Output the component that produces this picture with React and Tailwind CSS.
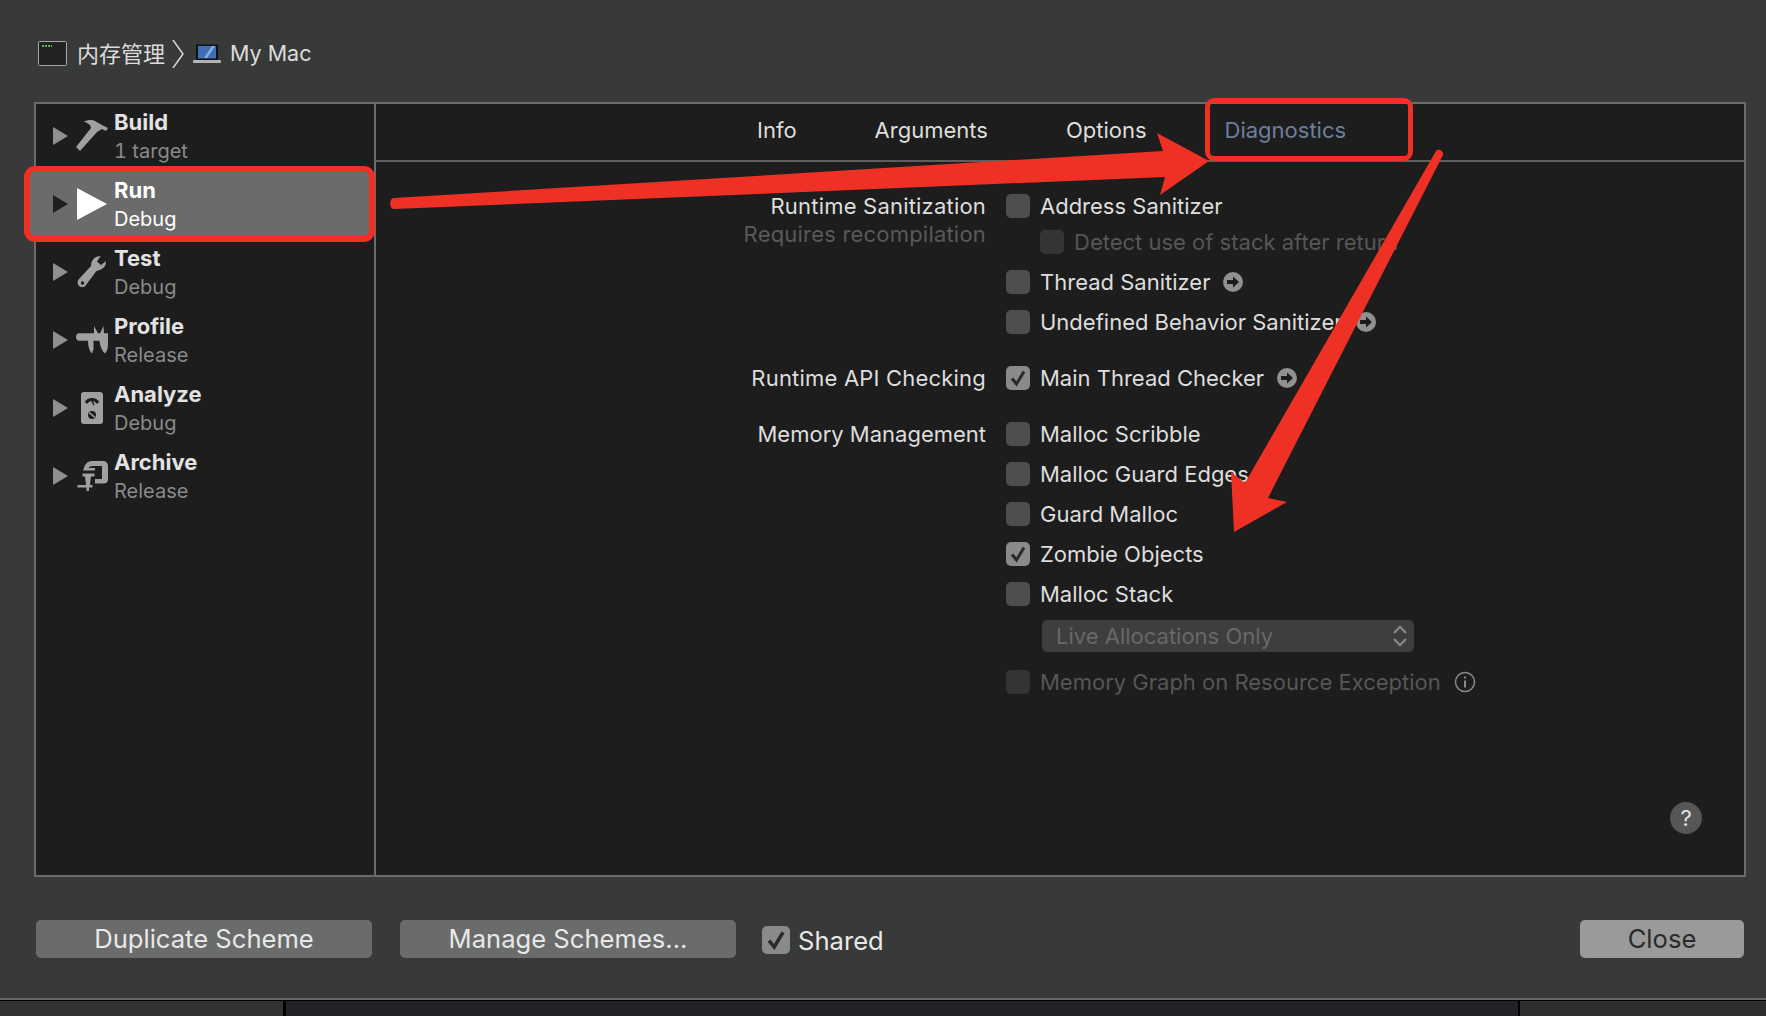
const font = "font-['Inter','Noto_Sans_CJK_SC',sans-serif]";

function Hammer() {
  return (
    <svg width="32" height="32" viewBox="0 0 32 32" fill="#a0a0a0">
      <path d="M0 27 L15 8 L14 5 C12 3.5 10 2.5 8 1.5 C12 0 16 -0.5 19 1 L26 5 L32 8 L30 11 L26 9 L21 12 L4 31 Z" />
    </svg>
  );
}

function Wrench() {
  return (
    <svg width="32" height="32" viewBox="0 0 32 32" fill="#a0a0a0">
      <path d="M24.7 0 C19 0 15 4 15 10 L3 23 C1 25 1 28 3 30 C5.5 32 8.5 31.5 10 29 L20 15.5 C21.5 14 24 14.5 25.7 13 C28.5 11.5 30 9 30 5 L25 9 L21 5.5 Z" />
      <circle cx="6.5" cy="27" r="1.7" fill="#1d1d1d" />
    </svg>
  );
}

function Calipers() {
  return (
    <svg width="32" height="30" viewBox="0 0 32 30" fill="#a0a0a0">
      <path d="M3 8.3 H18 L18 1 L22 8.3 H24 L27.5 1 L28 8.3 H32 V20 C32 24 30.5 27 29 28.5 C26 26 24 21 23.5 15.7 H17.5 V24 L16 28.5 C13.5 26 12 21 12 15.7 H3 C-1 15.7 -1 8.3 3 8.3 Z" />
    </svg>
  );
}

function Meter() {
  return (
    <svg width="22" height="32" viewBox="0 0 22 32">
      <rect width="22" height="32" rx="3" fill="#a0a0a0" />
      <path d="M5 11 A7 7 0 0 1 17 11" fill="none" stroke="#1d1d1d" strokeWidth="3" />
      <path d="M11 9 L13 13" stroke="#1d1d1d" strokeWidth="1.5" />
      <circle cx="11" cy="23" r="4" fill="#1d1d1d" />
      <path d="M8 20.5 L14 25.5" stroke="#a0a0a0" strokeWidth="1.6" />
    </svg>
  );
}

function Clamp() {
  return (
    <svg width="32" height="32" viewBox="0 0 32 32" fill="#a0a0a0">
      <path d="M8 8 C9 4 12 1 16 1 H27 C30 1 32 3 32 6 V20 C32 22 30 23.5 28 23.5 H19 V19 H26 V6 H17 C14 6 13 7 12.5 8 H19 V10.5 H7 Z" />
      <rect x="6.5" y="13.5" width="12" height="3" />
      <path d="M9 16 H15 L14 25 H10 Z" />
      <rect x="1.5" y="25" width="15" height="2.5" />
      <rect x="10.5" y="25" width="2.5" height="6" />
    </svg>
  );
}

function Play() {
  return (
    <svg width="30" height="32" viewBox="0 0 30 32" fill="#ffffff">
      <path d="M0 0 L30 16 L0 32 Z" />
    </svg>
  );
}

const schemes = [
  { name: "Build", sub: "1 target", icon: <Hammer /> },
  { name: "Run", sub: "Debug", icon: <Play />, active: true },
  { name: "Test", sub: "Debug", icon: <Wrench /> },
  { name: "Profile", sub: "Release", icon: <Calipers /> },
  { name: "Analyze", sub: "Debug", icon: <Meter /> },
  { name: "Archive", sub: "Release", icon: <Clamp /> },
];

function SchemeRow({ item }) {
  return (
    <div className="relative flex h-[68px] items-center pl-[17px]">
      {item.active && (
        <div className="absolute -top-[4px] -bottom-[4px] -left-[12px] -right-[1px] rounded-[11px] border-[6px] border-[#ee3124] bg-[#6b6b6b]" />
      )}
      <svg className="relative shrink-0" width="15" height="18" viewBox="0 0 15 18" fill={item.active ? "#1e1e1e" : "#8f8f8f"}>
        <path d="M0 0 L15 9 L0 18 Z" />
      </svg>
      <div className="relative ml-[8px] flex w-[32px] shrink-0 justify-center">{item.icon}</div>
      <div className="relative ml-[6px] pt-[2px]">
        <div className={`text-[22px] leading-[29px] font-bold ${item.active ? "text-white" : "text-[#e2e2e2]"}`}>{item.name}</div>
        <div className={`text-[20px] leading-[29px] tabular-nums ${item.active ? "text-white" : "text-[#8a8a8a]"}`}>{item.sub}</div>
      </div>
    </div>
  );
}

function Check({ size = 24, stroke = 3 }) {
  return (
    <svg width={size} height={size} viewBox="0 0 24 24" fill="none" stroke="#2a2a2a" strokeWidth={stroke}>
      <path d="M6 12.5 L10.5 18 L18 5.5" />
    </svg>
  );
}

function Checkbox({ checked, disabled }) {
  let bg = "bg-[#4e4e4e]";
  if (checked) bg = "bg-[#8a8a8a]";
  if (disabled) bg = "bg-[#343434]";
  return <div className={`h-[24px] w-[24px] shrink-0 rounded-[5px] ${bg}`}>{checked && <Check />}</div>;
}

function GoIcon() {
  return (
    <svg className="ml-[13px] shrink-0" width="20" height="20" viewBox="0 0 20 20">
      <circle cx="10" cy="10" r="10" fill="#909090" />
      <path d="M4 8 H10 V4.5 L16 10 L10 15.5 V12 H4 Z" fill="#1c1c1c" />
    </svg>
  );
}

function Option({ label, checked, disabled, go, className = "h-[40px]" }) {
  return (
    <div className={`flex items-center ${className}`}>
      <Checkbox checked={checked} disabled={disabled} />
      <span className={`ml-[10px] whitespace-nowrap text-[22px] ${disabled ? "text-[#565656]" : "text-[#dedede]"}`}>{label}</span>
      {go && <GoIcon />}
    </div>
  );
}

function Section({ label, note, labelClass = "", className = "", children }) {
  return (
    <div className={`flex ${className}`}>
      <div className={`w-[610px] shrink-0 pt-[5px] text-right text-[22px] ${labelClass}`}>
        <div className="leading-[30px] text-[#dedede]">{label}</div>
        {note && <div className="leading-[26px] text-[#595959]">{note}</div>}
      </div>
      <div className="ml-[20px] flex-1">{children}</div>
    </div>
  );
}

export default function App() {
  return (
    <div className={`relative flex h-[1016px] w-[1766px] flex-col overflow-hidden bg-[#383939] ${font}`}>
      <div className="flex h-[102px] shrink-0 items-center pl-[38px] pt-[5px] text-[21.5px] text-[#dcdcdc]">
        <svg width="29" height="25" viewBox="0 0 29 25">
          <rect x="0.5" y="0.5" width="28" height="24" rx="1" fill="#202322" stroke="#a8a8a8" />
          <path d="M4 5 H14" stroke="#58b848" strokeWidth="2" strokeDasharray="2 1" />
        </svg>
        <span className="ml-[10px] -translate-y-px font-['Noto_Sans_CJK_SC',sans-serif] text-[22px]">内存管理</span>
        <svg className="ml-[7px]" width="12" height="28" viewBox="0 0 12 28" fill="none" stroke="#d8d8d8" strokeWidth="1.5">
          <path d="M1 0 L11 14 L1 28" />
        </svg>
        <svg className="ml-[9px]" width="28" height="20" viewBox="0 0 28 20">
          <rect x="3" y="0.5" width="22" height="15.5" rx="1" fill="#111111" />
          <path d="M5 2 H23 V14.5 H5 Z" fill="#3f6fb4" />
          <path d="M11 14 L19 2 H22 L14 14 Z" fill="#8fb0de" />
          <rect x="0" y="16" width="28" height="3" rx="1" fill="#b4b4b4" />
        </svg>
        <span className="ml-[9px]">My Mac</span>
      </div>

      <div className="ml-[34px] flex h-[775px] w-[1712px] shrink-0 border-2 border-[#6c6c6c] bg-[#1d1d1d]">
        <div className="w-[338px] shrink-0">
          <div className="-mt-[2px]">
            {schemes.map((s) => (
              <SchemeRow key={s.name} item={s} />
            ))}
          </div>
        </div>
        <div className="w-[2px] shrink-0 bg-[#6c6c6c]" />
        <div className="relative flex-1">
          <div className="flex h-[58px] items-center gap-[78px] border-b-2 border-[#5e5e5e] pb-[4px] pl-[381px] text-[22px] text-[#dedede]">
            <span>Info</span>
            <span>Arguments</span>
            <span>Options</span>
            <span className="text-[#6d7e9e]">Diagnostics</span>
          </div>
          <div className="pt-[24px]">
            <Section label="Runtime Sanitization" note="Requires recompilation" labelClass="tracking-[0.2px]">
              <Option label="Address Sanitizer" />
              <div className="pl-[34px]">
                <Option label="Detect use of stack after return" disabled className="h-[32px]" />
              </div>
              <Option label="Thread Sanitizer" go className="mt-[4px] h-[40px]" />
              <Option label="Undefined Behavior Sanitizer" go />
            </Section>
            <Section label="Runtime API Checking" labelClass="tracking-[0.2px]" className="mt-[16px]">
              <Option label="Main Thread Checker" checked go />
            </Section>
            <Section label="Memory Management" className="mt-[16px]">
              <Option label="Malloc Scribble" />
              <Option label="Malloc Guard Edges" />
              <Option label="Guard Malloc" />
              <Option label="Zombie Objects" checked />
              <Option label="Malloc Stack" />
              <div className="ml-[36px] mt-[6px] flex h-[32px] w-[372px] items-center justify-between rounded-[5px] bg-[#3e3e3e] pl-[14px] pr-[6px] text-[22px] text-[#686868]">
                <span>Live Allocations Only</span>
                <svg width="16" height="22" viewBox="0 0 16 22" fill="none" stroke="#8a8a8a" strokeWidth="2">
                  <path d="M2 8 L8 2 L14 8" />
                  <path d="M2 14 L8 20 L14 14" />
                </svg>
              </div>
              <div className="mt-[10px] flex h-[40px] items-center">
                <Checkbox disabled />
                <span className="ml-[10px] whitespace-nowrap text-[22px] text-[#565656]">Memory Graph on Resource Exception</span>
                <svg className="ml-[13px]" width="22" height="22" viewBox="0 0 22 22" fill="none" stroke="#8a8a8a" strokeWidth="1.5">
                  <circle cx="11" cy="11" r="9.5" />
                  <path d="M11 9.5 V16.5" strokeWidth="2" />
                  <path d="M11 5.5 V7.5" strokeWidth="2" />
                </svg>
              </div>
            </Section>
          </div>
          <div className="absolute bottom-[41px] right-[42px] flex h-[32px] w-[32px] items-center justify-center rounded-full bg-[#565656] text-[22px] text-[#e4e4e4]">?</div>
        </div>
      </div>

      <div className="flex h-[121px] shrink-0 items-start pl-[36px] pr-[22px] pt-[43px]">
        <button className="h-[38px] w-[336px] rounded-[5px] bg-[#6a6b6b] text-[25.6px] leading-[38px] text-[#e8e8e8]">Duplicate Scheme</button>
        <button className="ml-[28px] h-[38px] w-[336px] rounded-[5px] bg-[#6a6b6b] text-[25.6px] leading-[38px] text-[#e8e8e8]">Manage Schemes...</button>
        <div className="ml-[26px] mt-[6px] flex h-[28px] items-center">
          <div className="h-[28px] w-[28px] rounded-[5px] bg-[#8a8a8a]">
            <Check size={28} />
          </div>
          <span className="ml-[8px] translate-y-[1px] text-[25.6px] text-[#e8e8e8]">Shared</span>
        </div>
        <button className="ml-auto h-[38px] w-[164px] rounded-[5px] bg-[#9a9a9a] text-[25.6px] leading-[38px] text-[#2b2b2b]">Close</button>
      </div>

      <div className="h-[2px] shrink-0 bg-[#666666]" />
      <div className="h-[1px] shrink-0 bg-black" />
      <div className="flex flex-1">
        <div className="w-[283px] bg-[#313332]" />
        <div className="w-[3px] bg-black" />
        <div className="flex-1 bg-[#222328]" />
        <div className="w-[2px] bg-black" />
        <div className="w-[246px] bg-[#2e2e2e]" />
      </div>

      {/* red annotations on top of the screenshot */}
      <div className="absolute left-[1205px] top-[98px] h-[63px] w-[208px] rounded-[9px] border-[5px] border-[#ee3124]" />
      <svg className="pointer-events-none absolute left-0 top-0" width="1766" height="1016" fill="#ee3124">
        <path d="M394 198 L1163 151 L1157 133 L1209 161 L1160 195 L1165 177 L394 209 C389 209 389 198 394 198 Z" />
        <path d="M1436 151 C1438 148 1444 151 1443 155 L1268 498 L1287 502 L1234 532 L1231 472 L1245 483 Z" />
      </svg>
    </div>
  );
}
